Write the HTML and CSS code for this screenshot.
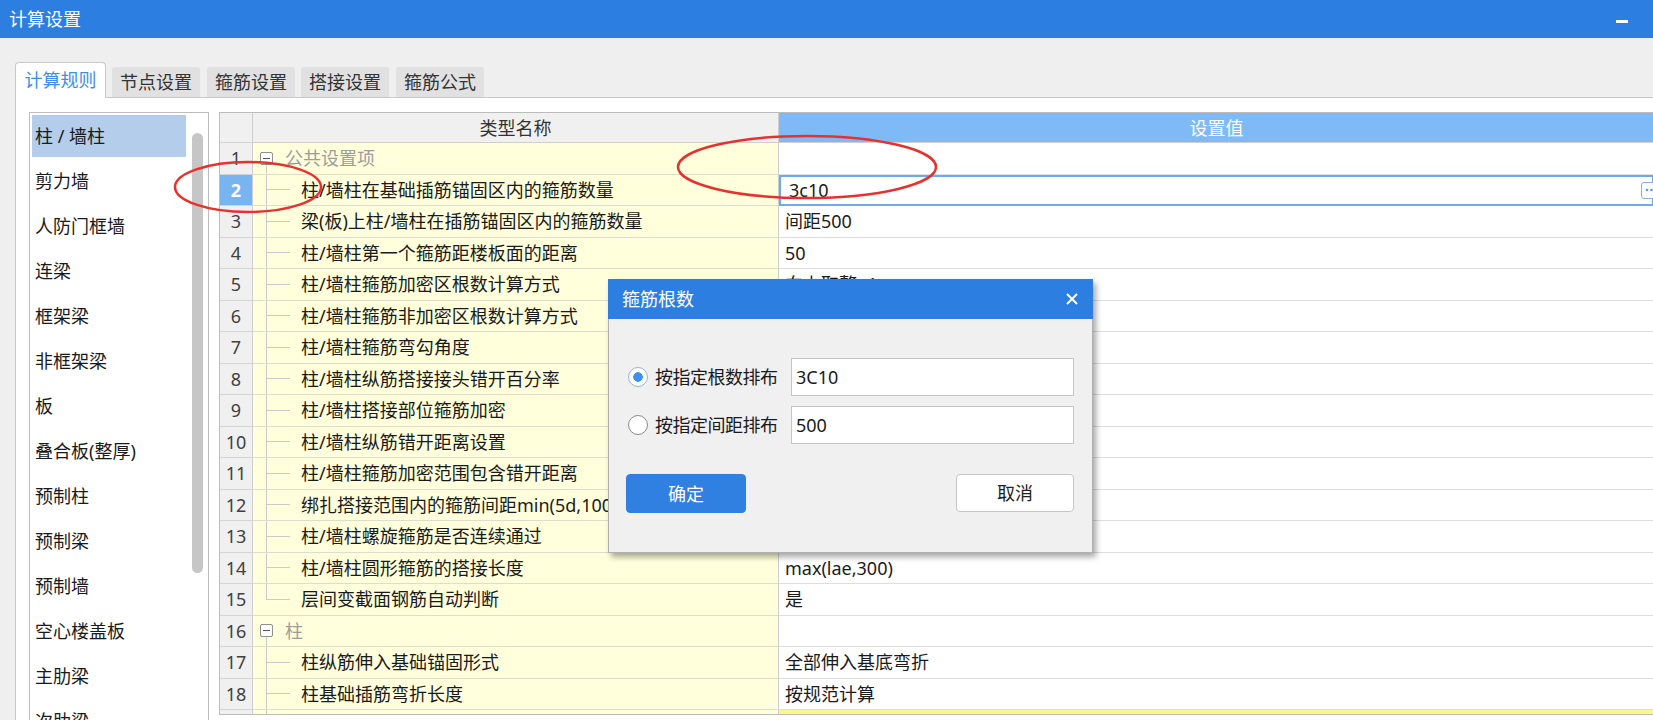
FILE: index.html
```html
<!DOCTYPE html>
<html lang="zh-CN">
<head>
<meta charset="utf-8">
<title>计算设置</title>
<link rel="stylesheet" href="styles.css">
</head>
<body>
<header class="titlebar">
  <span class="title">计算设置</span>
  <span class="minimize"></span>
</header>
<nav class="tabs">
  <div class="tab active">计算规则</div>
  <div class="tab t2">节点设置</div>
  <div class="tab t3">箍筋设置</div>
  <div class="tab t2">搭接设置</div>
  <div class="tab t3">箍筋公式</div>
</nav>
<section class="panel">
  <div class="list">
    <ul class="list-items">
      <li class="selected">柱 / 墙柱</li>
      <li>剪力墙</li>
      <li>人防门框墙</li>
      <li>连梁</li>
      <li>框架梁</li>
      <li>非框架梁</li>
      <li>板</li>
      <li>叠合板(整厚)</li>
      <li>预制柱</li>
      <li>预制梁</li>
      <li>预制墙</li>
      <li>空心楼盖板</li>
      <li>主肋梁</li>
      <li>次肋梁</li>
    </ul>
    <div class="list-track"><div class="thumb"></div></div>
  </div>
  <div class="grid">
    <div class="row head">
      <div class="c-num"></div>
      <div class="c-name">类型名称</div>
      <div class="c-val">设置值</div>
    </div>
    <div class="row">
      <div class="c-num">1</div>
      <div class="c-name group"><span class="tree-group"><i class="box"></i></span>公共设置项</div>
      <div class="c-val"></div>
    </div>
    <div class="row">
      <div class="c-num current">2</div>
      <div class="c-name"><span class="tree"></span>柱/墙柱在基础插筋锚固区内的箍筋数量</div>
      <div class="c-val editing"><span class="edit-text">3c10</span><span class="ellipsis"><svg width="14" height="6" viewBox="0 0 14 6"><circle cx="3" cy="3" r="1.3" fill="#5b9be3"/><circle cx="7.5" cy="3" r="1.3" fill="#5b9be3"/><circle cx="12" cy="3" r="1.3" fill="#5b9be3"/></svg></span></div>
    </div>
    <div class="row">
      <div class="c-num">3</div>
      <div class="c-name"><span class="tree"></span>梁(板)上柱/墙柱在插筋锚固区内的箍筋数量</div>
      <div class="c-val">间距500</div>
    </div>
    <div class="row">
      <div class="c-num">4</div>
      <div class="c-name"><span class="tree"></span>柱/墙柱第一个箍筋距楼板面的距离</div>
      <div class="c-val">50</div>
    </div>
    <div class="row">
      <div class="c-num">5</div>
      <div class="c-name"><span class="tree"></span>柱/墙柱箍筋加密区根数计算方式</div>
      <div class="c-val">向上取整+1</div>
    </div>
    <div class="row">
      <div class="c-num">6</div>
      <div class="c-name"><span class="tree"></span>柱/墙柱箍筋非加密区根数计算方式</div>
      <div class="c-val"></div>
    </div>
    <div class="row">
      <div class="c-num">7</div>
      <div class="c-name"><span class="tree"></span>柱/墙柱箍筋弯勾角度</div>
      <div class="c-val"></div>
    </div>
    <div class="row">
      <div class="c-num">8</div>
      <div class="c-name"><span class="tree"></span>柱/墙柱纵筋搭接接头错开百分率</div>
      <div class="c-val"></div>
    </div>
    <div class="row">
      <div class="c-num">9</div>
      <div class="c-name"><span class="tree"></span>柱/墙柱搭接部位箍筋加密</div>
      <div class="c-val"></div>
    </div>
    <div class="row">
      <div class="c-num">10</div>
      <div class="c-name"><span class="tree"></span>柱/墙柱纵筋错开距离设置</div>
      <div class="c-val"></div>
    </div>
    <div class="row">
      <div class="c-num">11</div>
      <div class="c-name"><span class="tree"></span>柱/墙柱箍筋加密范围包含错开距离</div>
      <div class="c-val"></div>
    </div>
    <div class="row">
      <div class="c-num">12</div>
      <div class="c-name"><span class="tree"></span>绑扎搭接范围内的箍筋间距min(5d,100)</div>
      <div class="c-val"></div>
    </div>
    <div class="row">
      <div class="c-num">13</div>
      <div class="c-name"><span class="tree"></span>柱/墙柱螺旋箍筋是否连续通过</div>
      <div class="c-val"></div>
    </div>
    <div class="row">
      <div class="c-num">14</div>
      <div class="c-name"><span class="tree"></span>柱/墙柱圆形箍筋的搭接长度</div>
      <div class="c-val">max(lae,300)</div>
    </div>
    <div class="row">
      <div class="c-num">15</div>
      <div class="c-name"><span class="tree last"></span>层间变截面钢筋自动判断</div>
      <div class="c-val">是</div>
    </div>
    <div class="row">
      <div class="c-num">16</div>
      <div class="c-name group"><span class="tree-group"><i class="box"></i></span>柱</div>
      <div class="c-val"></div>
    </div>
    <div class="row">
      <div class="c-num">17</div>
      <div class="c-name"><span class="tree"></span>柱纵筋伸入基础锚固形式</div>
      <div class="c-val">全部伸入基底弯折</div>
    </div>
    <div class="row">
      <div class="c-num">18</div>
      <div class="c-name"><span class="tree"></span>柱基础插筋弯折长度</div>
      <div class="c-val">按规范计算</div>
    </div>
    <div class="row">
      <div class="c-num"></div>
      <div class="c-name"><span class="tree"></span></div>
      <div class="c-val highlight"></div>
    </div>
  </div>
</section>

<div class="dialog">
  <div class="dlg-title">
    <span>箍筋根数</span>
    <svg class="close" width="12" height="12" viewBox="0 0 12 12"><path d="M1 1L11 11M11 1L1 11" stroke="#fff" stroke-width="2" fill="none"/></svg>
  </div>
  <div class="dlg-body">
    <div class="opt">
      <span class="radio checked"></span>
      <span class="opt-label">按指定根数排布</span>
      <span class="field">3C10</span>
    </div>
    <div class="opt">
      <span class="radio"></span>
      <span class="opt-label">按指定间距排布</span>
      <span class="field">500</span>
    </div>
    <div class="btns">
      <span class="btn primary">确定</span>
      <span class="btn">取消</span>
    </div>
  </div>
</div>

<svg class="marks" width="1653" height="720" viewBox="0 0 1653 720">
  <ellipse cx="248" cy="187" rx="73" ry="25" fill="none" stroke="#e5322f" stroke-width="2.5"/>
  <ellipse cx="807" cy="167" rx="129" ry="31" fill="none" stroke="#e5322f" stroke-width="2.5"/>
</svg>
</body>
</html>
```

FILE: styles.css
```css
* { box-sizing: border-box; }
html, body { margin: 0; padding: 0; }
body {
  width: 1653px;
  height: 720px;
  overflow: hidden;
  position: relative;
  background: #efefef;
  font-family: "Noto Sans", "Noto Sans CJK SC", sans-serif;
  font-size: 18px;
  color: #1a1a1a;
}

/* title bar */
.titlebar {
  height: 38px;
  background: #2c7fe0;
  color: #fff;
  display: flex;
  align-items: center;
  justify-content: space-between;
  padding: 0 25px 0 9px;
}
.title { line-height: 1; }
.minimize { width: 12px; height: 3px; background: #fff; margin-top: 4px; }

/* tabs */
.tabs {
  display: flex;
  align-items: flex-end;
  margin: 24px 0 0 15px;
  height: 36px;
  border-bottom: 1px solid #c8c8c8;
}
.tab {
  width: 88px;
  height: 30px;
  background: #e1e1e1;
  border-radius: 3px 3px 0 0;
  display: flex;
  align-items: center;
  justify-content: center;
  color: #333;
  line-height: 1;
}
.tab.t2 { margin-left: 6px; }
.tab.t3 { margin-left: 7px; }
.tab.active {
  width: 91px;
  height: 36px;
  margin-bottom: -1px;
  background: #fff;
  border: 1px solid #c8c8c8;
  border-bottom: none;
  border-radius: 4px 4px 0 0;
  color: #3d8fe3;
  padding-bottom: 2px;
}

/* panel */
.panel {
  margin-left: 15px;
  height: 622px;
  background: #fff;
  border-left: 1px solid #c8c8c8;
  padding: 14px 0 0 13px;
  display: flex;
  align-items: flex-start;
  gap: 10px;
  overflow: hidden;
}

/* left list */
.list {
  flex: none;
  width: 180px;
  height: 640px;
  border: 1px solid #bdbdbd;
  padding: 2px 0 0 2px;
  display: flex;
}
.list-items {
  list-style: none;
  margin: 0;
  padding: 0;
  width: 154px;
}
.list-items li {
  height: 42px;
  margin-bottom: 3px;
  line-height: 42px;
  padding-left: 3px;
  white-space: nowrap;
  color: #1a1a1a;
}
.list-items li.selected { background: #b3cdea; }
.list-track { margin-left: 6px; }
.thumb {
  margin-top: 18px;
  width: 11px;
  height: 440px;
  border-radius: 6px;
  background: #c6c6c6;
}

/* grid */
.grid {
  flex: none;
  width: 1436px;
  height: 603px;
  border: 1px solid #bcbcbc;
  overflow: hidden;
}
.row {
  display: flex;
  height: 31.5px;
}
.row.head { height: 30px; }
.c-num {
  flex: none;
  width: 33px;
  background: #f0f0f0;
  border-right: 1px solid #cdcdcd;
  border-bottom: 1px solid #d4d4d4;
  display: flex;
  align-items: center;
  justify-content: center;
  color: #404040;
  line-height: 1;
}
.c-num.current {
  background: #78b4f0;
  color: #fff;
  font-weight: bold;
}
.c-name {
  flex: none;
  width: 526px;
  background: #ffffdc;
  border-right: 1px solid #cdcdcd;
  border-bottom: 1px solid #dcdcd0;
  display: flex;
  align-items: center;
  white-space: nowrap;
  overflow: hidden;
  line-height: 1;
}
.c-name.group { color: #9c9c9c; }
.c-val {
  flex: 1;
  min-width: 0;
  background: #fff;
  border-bottom: 1px solid #dedede;
  display: flex;
  align-items: center;
  padding-left: 6px;
  white-space: nowrap;
  line-height: 1;
}
.row.head .c-name {
  background: #f0f0f0;
  justify-content: center;
  color: #333;
  border-bottom-color: #cfcfcf;
}
.row.head .c-val {
  background: #7fbaf6;
  color: #fff;
  justify-content: center;
  padding-left: 0;
  border-bottom-color: #cfcfcf;
}
.c-val.editing {
  border: 2px solid #6ea9ec;
  padding-left: 8px;
}
.edit-text { flex: 1; }
.ellipsis {
  flex: none;
  width: 20px;
  height: 17px;
  margin-right: -9px;
  border: 1.5px solid #7fb1ea;
  border-radius: 3px;
  background: #fff;
  display: flex;
  align-items: center;
  padding-left: 2px;
}
.c-val.highlight { background: #fbf68a; }

/* tree connectors */
.tree {
  flex: none;
  width: 48px;
  align-self: stretch;
  background:
    linear-gradient(#c9c9c9, #c9c9c9) 13px 0 / 1px 100% no-repeat,
    linear-gradient(#c9c9c9, #c9c9c9) 13px 50% / 24px 1px no-repeat;
}
.tree.last {
  background:
    linear-gradient(#c9c9c9, #c9c9c9) 13px 0 / 1px 50% no-repeat,
    linear-gradient(#c9c9c9, #c9c9c9) 13px 50% / 24px 1px no-repeat;
}
.tree-group {
  flex: none;
  width: 32px;
  align-self: stretch;
  display: flex;
  align-items: center;
  background: linear-gradient(#c9c9c9, #c9c9c9) 13px 100% / 1px 50% no-repeat;
}
.box {
  display: block;
  width: 13px;
  height: 13px;
  margin-left: 7px;
  border: 1px solid #8e8e8e;
  border-radius: 2px;
  background: #fff linear-gradient(#555, #555) center / 7px 1px no-repeat;
}

/* dialog */
.dialog {
  position: absolute;
  left: 608px;
  top: 279px;
  width: 485px;
  height: 274px;
  box-shadow: 3px 4px 6px rgba(0, 0, 0, 0.35);
}
.dlg-title {
  height: 40px;
  background: #2c7fe0;
  color: #fff;
  display: flex;
  align-items: center;
  justify-content: space-between;
  padding: 0 15px 0 14px;
  line-height: 1;
}
.close { display: block; }
.dlg-body {
  height: 234px;
  background: #f0f0f0;
  border: 1px solid #b0b0b0;
  border-top: none;
  padding: 39px 18px 0 19px;
}
.opt {
  display: flex;
  align-items: center;
  height: 38px;
  margin-bottom: 10px;
}
.radio {
  flex: none;
  width: 20px;
  height: 20px;
  border-radius: 50%;
  border: 1px solid #8a8a8a;
  background: #fff;
}
.radio.checked {
  border-color: #9fb3cc;
  background: radial-gradient(circle, #3d8ff0 0 4.5px, #fff 5px);
}
.opt-label {
  flex: none;
  width: 126px;
  margin-left: 7px;
  line-height: 1;
  white-space: nowrap;
  letter-spacing: -0.5px;
}
.field {
  flex: none;
  width: 283px;
  height: 38px;
  margin-left: 10px;
  background: #fff;
  border: 1px solid #c5c5c5;
  display: flex;
  align-items: center;
  padding-left: 4px;
  line-height: 1;
}
.btns {
  display: flex;
  justify-content: space-between;
  margin: 30px 0 0 -2px;
}
.btn {
  width: 118px;
  height: 38px;
  background: #fff;
  border: 1px solid #c6c6c6;
  border-radius: 4px;
  display: flex;
  align-items: center;
  justify-content: center;
  line-height: 1;
  color: #222;
}
.btn.primary {
  width: 120px;
  height: 39px;
  background: #2f80e1;
  border-color: #2f80e1;
  color: #fff;
}

/* annotation marks */
.marks {
  position: absolute;
  left: 0;
  top: 0;
  pointer-events: none;
}
```
